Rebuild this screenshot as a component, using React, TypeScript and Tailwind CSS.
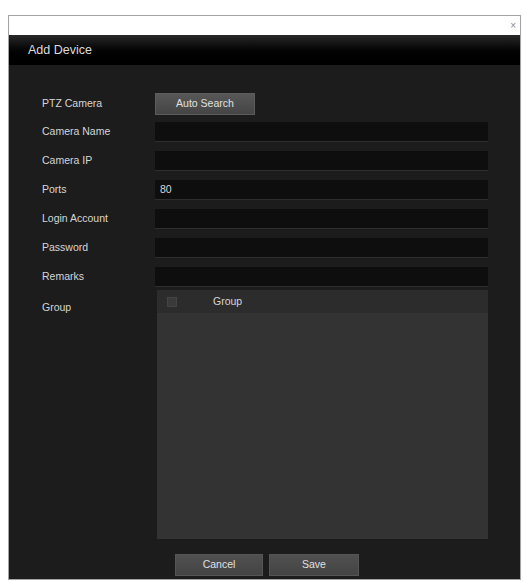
import React from "react";

const font = { fontFamily: '"Liberation Sans", Arial, sans-serif' };

function Row({ label, children, top }: { label: string; children: React.ReactNode; top?: boolean }) {
  return (
    <div className={`flex ${top ? "items-start" : "items-center"}`}>
      <div className="w-[113px] shrink-0 text-[10.5px] text-[#d6d6d6]">{label}</div>
      {children}
    </div>
  );
}

function Field({ value }: { value?: string }) {
  return (
    <div className="h-[20px] w-[333px] bg-[#0e0e0e] border-b border-[#2e2e2e] flex items-center px-[5px] text-[10.5px] text-[#d6d6d6]">
      {value}
    </div>
  );
}

export default function App() {
  return (
    <div className="w-[523px] h-[582px] bg-white pt-[15px] pl-[8px]" style={font}>
      <div className="w-[513px] h-[565px] border border-[#a3a3a3] flex flex-col bg-[#1c1c1c]">
        <div className="h-[19px] bg-white flex items-center justify-end pr-[4px] shrink-0">
          <span className="text-[10px] leading-none text-[#8a8a8a]">×</span>
        </div>
        <div className="h-[30px] bg-gradient-to-b from-[#2a2a2a] via-[#050505] to-[#000] flex items-center pl-[19px] shrink-0">
          <span className="text-[12.5px] text-[#dcdcdc]">Add Device</span>
        </div>
        <div className="flex-1 flex flex-col pl-[33px] pt-[28px]">
          <Row label="PTZ Camera">
            <button className="h-[22px] w-[100px] bg-gradient-to-b from-[#575757] to-[#454545] border border-[#5c5c5c] text-[10.5px] text-[#e0e0e0]">
              Auto Search
            </button>
          </Row>
          <div className="mt-[7px] flex flex-col gap-[9px]">
            <Row label="Camera Name"><Field /></Row>
            <Row label="Camera IP"><Field /></Row>
            <Row label="Ports"><Field value="80" /></Row>
            <Row label="Login Account"><Field /></Row>
            <Row label="Password"><Field /></Row>
            <Row label="Remarks"><Field /></Row>
          </div>
          <div className="mt-[3px] flex items-start">
            <div className="w-[113px] shrink-0 text-[10.5px] text-[#d6d6d6] pt-[10px]">Group</div>
            <div className="w-[331px] ml-[2px] h-[249px] bg-[#333333] flex flex-col">
              <div className="h-[23px] bg-[#2c2c2c] flex items-center">
                <div className="ml-[10px] w-[10px] h-[10px] bg-[#3a3a3a] border border-[#444]" />
                <span className="ml-[36px] text-[10.5px] text-[#d6d6d6]">Group</span>
              </div>
            </div>
          </div>
          <div className="mt-[15px] flex gap-[6px] pl-[133px]">
            <button className="h-[22px] w-[88px] bg-gradient-to-b from-[#505050] to-[#444] border border-[#555] text-[10.5px] text-[#e0e0e0]">
              Cancel
            </button>
            <button className="h-[22px] w-[90px] bg-gradient-to-b from-[#505050] to-[#444] border border-[#555] text-[10.5px] text-[#e0e0e0]">
              Save
            </button>
          </div>
        </div>
      </div>
    </div>
  );
}
